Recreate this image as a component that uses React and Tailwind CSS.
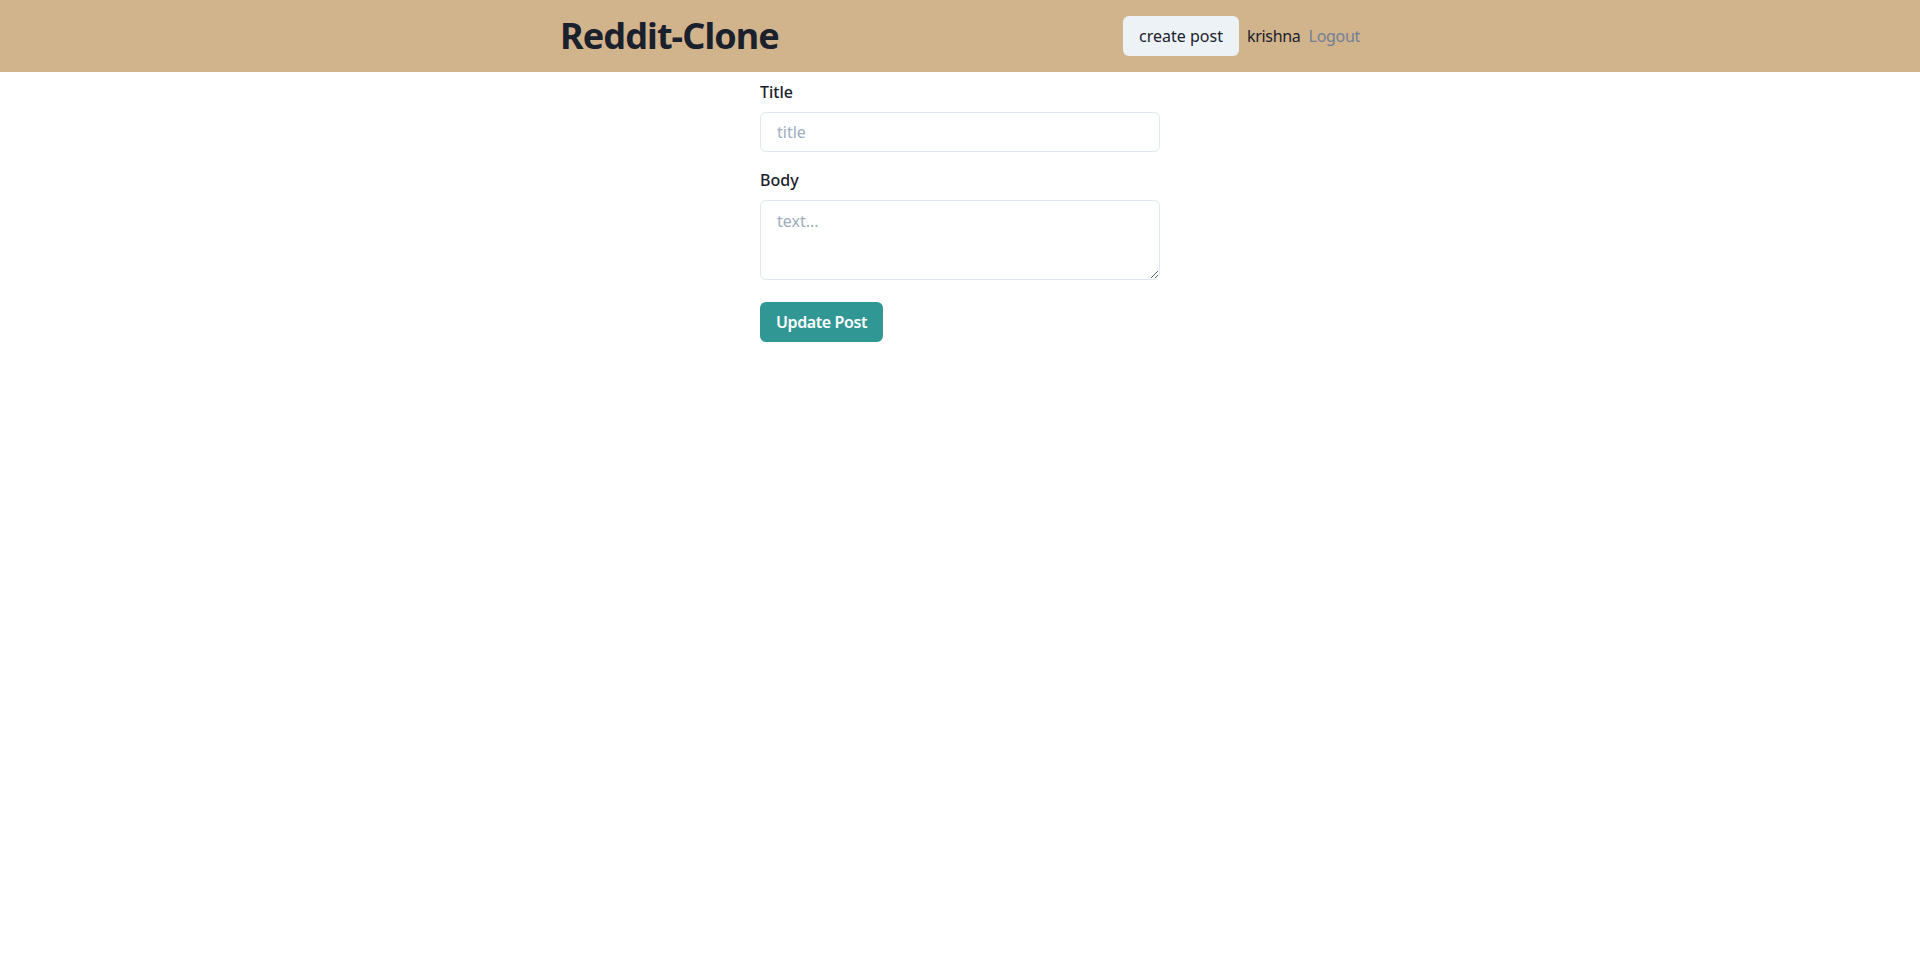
import React, { useState } from 'react';

const App = () => {
  const [title, setTitle] = useState('');
  const [body, setBody] = useState('');

  return (
    <div className="min-h-screen bg-white text-[#1a202c] font-['Noto_Sans',sans-serif]">
      {/* header */}
      <header className="bg-[#d2b48c] h-[72px]">
        <div className="mx-auto w-[800px] h-full flex items-center justify-between">
          <h1 className="text-[36px] leading-[40px] font-bold tracking-[-0.9px] text-[#1a202c]">Reddit-Clone</h1>
          <div className="flex items-center">
            <button className="h-10 px-4 rounded-md bg-[#edf2f7] text-[16px] text-[#1a202c]">
              create post
            </button>
            <span className="ml-2 text-[16px] tracking-[-0.3px] text-[#1a202c]">krishna</span>
            <button className="ml-2 text-[16px] tracking-[-0.3px] text-[#718096]">Logout</button>
          </div>
        </div>
      </header>

      {/* form */}
      <main className="mx-auto w-[400px] pt-2">
        <form onSubmit={(e) => e.preventDefault()}>
          <label className="block mb-2 text-[16px] leading-6 font-medium">Title</label>
          <input
            value={title}
            onChange={(e) => setTitle(e.target.value)}
            placeholder="title"
            className="w-full h-10 px-4 rounded-md border border-[#e2e8f0] text-[16px] outline-none placeholder:text-[#a0aec0]"
          />

          <label className="block mt-4 mb-2 text-[16px] leading-6 font-medium">Body</label>
          <textarea
            value={body}
            onChange={(e) => setBody(e.target.value)}
            placeholder="text..."
            className="block w-full h-20 px-4 py-2 rounded-md border border-[#e2e8f0] text-[16px] outline-none placeholder:text-[#a0aec0]"
          />

          <button
            type="submit"
            className="mt-[22px] h-10 px-4 rounded-md bg-[#319795] text-white text-[16px] font-semibold tracking-[-0.4px]"
          >
            Update Post
          </button>
        </form>
      </main>
    </div>
  );
};

export default App;
